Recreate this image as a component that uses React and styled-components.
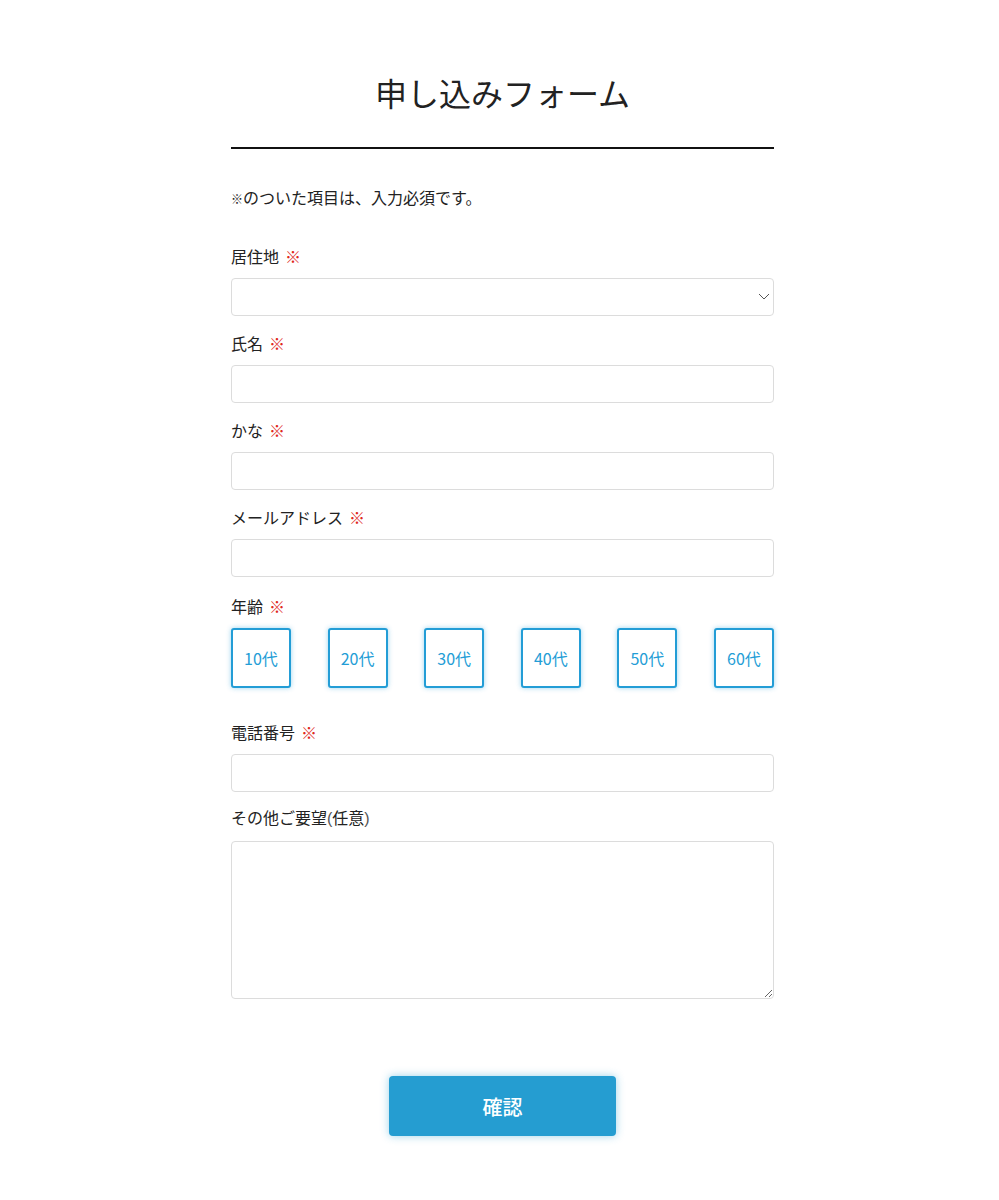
import React from 'react';
import styled, { createGlobalStyle } from 'styled-components';

const GlobalStyle = createGlobalStyle`
  body {
    margin: 0;
    background: #fff;
    color: #222;
    font-family: "Noto Sans CJK JP", "Noto Sans", sans-serif;
  }
`;

// Styled Components
const Page = styled.div`
  display: flex;
  justify-content: center;
  padding: 70px 0 60px 6px;
`;

const FormWrapper = styled.form`
  display: flex;
  flex-direction: column;
  width: 543px;
`;

const Title = styled.h1`
  margin: 0;
  font-size: 32px;
  font-weight: 400;
  line-height: 44px;
  text-align: center;
  color: #222;
`;

const Divider = styled.hr`
  margin: 33px 0 0;
  border: none;
  height: 2px;
  background: #111;
`;

const Note = styled.p`
  margin: 37px 0 34px;
  font-size: 16px;
  line-height: 22px;
`;

const Mark = styled.span`
  font-size: 12px;
`;

const Field = styled.div`
  display: flex;
  flex-direction: column;
  margin-bottom: ${props => props.gap ?? 15}px;
`;

const Label = styled.label`
  font-size: 16px;
  line-height: 24px;
  margin-bottom: 10px;
  color: #222;
`;

const Required = styled.span`
  color: #e02a1d;
  margin-left: 6px;
`;

const Paren = styled.span`
  font-family: "Liberation Sans", sans-serif;
  font-weight: 300;
  color: #555;
`;

const Input = styled.input`
  box-sizing: border-box;
  height: 38px;
  width: 100%;
  border: 1px solid #dcdcdc;
  border-radius: 4px;
  padding: 0 10px;
  font-size: 16px;
  background: #fff;
`;

const SelectWrap = styled.div`
  position: relative;
`;

const Select = styled.select`
  box-sizing: border-box;
  appearance: none;
  height: 38px;
  width: 100%;
  border: 1px solid #dcdcdc;
  border-radius: 4px;
  padding: 0 10px;
  font-size: 16px;
  background: #fff;
`;

const Chevron = styled.svg`
  position: absolute;
  right: 4px;
  top: 15px;
  pointer-events: none;
`;

const AgeRow = styled.div`
  display: flex;
  justify-content: space-between;
`;

const AgeButton = styled.button`
  box-sizing: border-box;
  width: 60px;
  height: 60px;
  border: 2px solid #239dd6;
  border-radius: 3px;
  background: #fff;
  color: #239dd6;
  font-family: "Noto Sans CJK JP", sans-serif;
  font-size: 16px;
  box-shadow: 0 0 5px rgba(35, 157, 214, 0.45);
  cursor: pointer;
  padding: 0;
`;

const TextArea = styled.textarea`
  box-sizing: border-box;
  width: 100%;
  height: 158px;
  border: 1px solid #dcdcdc;
  border-radius: 4px;
  padding: 8px 10px;
  font-size: 16px;
  display: block;
`;

const SubmitRow = styled.div`
  display: flex;
  justify-content: center;
  margin-top: 77px;
`;

const SubmitButton = styled.button`
  width: 227px;
  height: 60px;
  border: none;
  border-radius: 4px;
  background: #259dd1;
  color: #fff;
  font-family: "Noto Sans CJK JP", sans-serif;
  font-size: 20px;
  font-weight: 500;
  box-shadow: 0 0 8px rgba(37, 157, 209, 0.45);
  cursor: pointer;
`;
// End of Styled Components

const ages = ['10代', '20代', '30代', '40代', '50代', '60代'];

const App = () => (
  <Page>
    <GlobalStyle />
    <FormWrapper onSubmit={e => e.preventDefault()}>
      <Title>申し込みフォーム</Title>
      <Divider />
      <Note><Mark>※</Mark>のついた項目は、入力必須です。</Note>

      <Field>
        <Label>居住地<Required>※</Required></Label>
        <SelectWrap>
          <Select defaultValue="">
            <option value=""></option>
          </Select>
          <Chevron width="12" height="7" viewBox="0 0 12 7">
            <path d="M1 1l5 5 5-5" fill="none" stroke="#555" strokeWidth="1" />
          </Chevron>
        </SelectWrap>
      </Field>

      <Field>
        <Label>氏名<Required>※</Required></Label>
        <Input type="text" />
      </Field>

      <Field>
        <Label>かな<Required>※</Required></Label>
        <Input type="text" />
      </Field>

      <Field gap={17}>
        <Label>メールアドレス<Required>※</Required></Label>
        <Input type="email" />
      </Field>

      <Field gap={32}>
        <Label>年齢<Required>※</Required></Label>
        <AgeRow>
          {ages.map(age => (
            <AgeButton type="button" key={age}>{age}</AgeButton>
          ))}
        </AgeRow>
      </Field>

      <Field gap={13}>
        <Label>電話番号<Required>※</Required></Label>
        <Input type="tel" />
      </Field>

      <Field gap={0}>
        <Label>その他ご要望<Paren>(</Paren>任意<Paren>)</Paren></Label>
        <TextArea />
      </Field>

      <SubmitRow>
        <SubmitButton type="submit">確認</SubmitButton>
      </SubmitRow>
    </FormWrapper>
  </Page>
);

export default App;
